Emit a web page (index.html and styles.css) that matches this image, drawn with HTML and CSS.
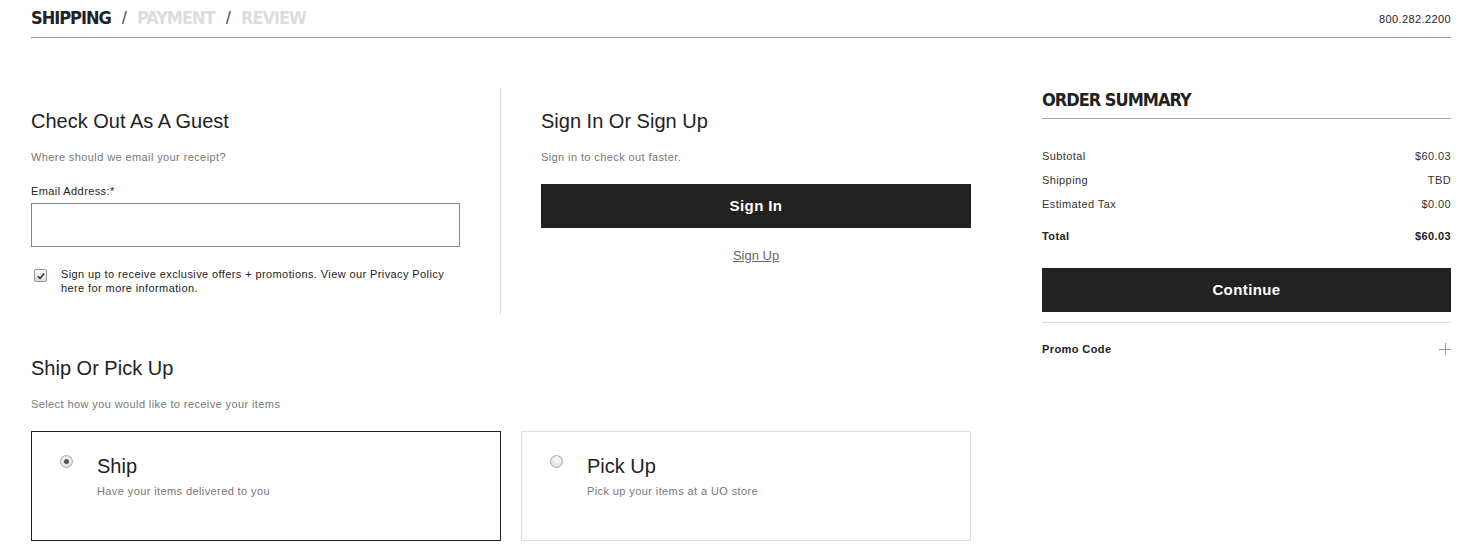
FILE: index.html
```html
<!DOCTYPE html>
<html lang="en">
<head>
  <meta charset="UTF-8">
  <meta name="viewport" content="width=device-width, initial-scale=1.0">
  <title>Checkout - Shipping</title>
  <link rel="stylesheet" href="styles.css">
</head>
<body>
  <div class="page">
    <header class="steps-bar">
      <div class="steps">
        <span class="step active">SHIPPING</span>
        <span class="slash">/</span>
        <span class="step">PAYMENT</span>
        <span class="slash">/</span>
        <span class="step">REVIEW</span>
      </div>
      <div class="phone">800.282.2200</div>
    </header>

    <div class="layout">
      <main class="main-col">
        <div class="account-row">
          <section class="guest">
            <h2>Check Out As A Guest</h2>
            <p class="hint">Where should we email your receipt?</p>
            <label class="field-label" for="email">Email Address:*</label>
            <input class="text-input" type="email" id="email">
            <div class="optin">
              <span class="checkbox">
                <svg width="8" height="8" viewBox="0 0 8 8"><path d="M0.8 4.2 L3 6.4 L7.2 1.4" fill="none" stroke="#333" stroke-width="1.6"/></svg>
              </span>
              <span class="optin-text">Sign up to receive exclusive offers + promotions. View our Privacy Policy here for more information.</span>
            </div>
          </section>

          <section class="signin">
            <h2>Sign In Or Sign Up</h2>
            <p class="hint">Sign in to check out faster.</p>
            <button class="btn-dark signin-btn">Sign In</button>
            <a class="signup-link" href="#">Sign Up</a>
          </section>
        </div>

        <section class="delivery">
          <h2>Ship Or Pick Up</h2>
          <p class="hint">Select how you would like to receive your items</p>
          <div class="options">
            <div class="option selected">
              <span class="radio checked"></span>
              <div class="option-body">
                <div class="option-title">Ship</div>
                <div class="option-sub">Have your items delivered to you</div>
              </div>
            </div>
            <div class="option">
              <span class="radio"></span>
              <div class="option-body">
                <div class="option-title">Pick Up</div>
                <div class="option-sub">Pick up your items at a UO store</div>
              </div>
            </div>
          </div>
        </section>
      </main>

      <aside class="summary">
        <h3 class="summary-title">ORDER SUMMARY</h3>
        <div class="lines">
          <div class="line"><span>Subtotal</span><span>$60.03</span></div>
          <div class="line"><span>Shipping</span><span>TBD</span></div>
          <div class="line"><span>Estimated Tax</span><span>$0.00</span></div>
          <div class="line total"><span>Total</span><span>$60.03</span></div>
        </div>
        <button class="btn-dark continue-btn">Continue</button>
        <div class="promo">
          <span>Promo Code</span>
          <span class="plus"></span>
        </div>
      </aside>
    </div>
  </div>
</body>
</html>
```

FILE: styles.css
```css
html, body {
  margin: 0;
  padding: 0;
  background: #fff;
  color: #222;
  font-family: "Liberation Sans", Arial, Helvetica, sans-serif;
  -webkit-font-smoothing: antialiased;
}
.page {
  padding: 0 31px;
}

/* top bar */
.steps-bar {
  display: flex;
  justify-content: space-between;
  align-items: center;
  height: 37px;
  border-bottom: 1px solid #999;
}
.steps {
  font-family: "DejaVu Sans", sans-serif;
  font-stretch: condensed;
  font-weight: bold;
  font-size: 18px;
  line-height: 24px;
  letter-spacing: -1px;
  display: flex;
  gap: 11px;
  padding-bottom: 1px;
}
.step {
  color: #ddd;
}
.step.active {
  color: #222;
}
.slash {
  color: #666;
  font-size: 16px;
}
.phone {
  font-size: 11px;
  letter-spacing: 0.4px;
  color: #222;
}

/* main grid */
.layout {
  display: grid;
  grid-template-columns: 940px 1fr;
  column-gap: 71px;
}

h2 {
  font-size: 20px;
  line-height: 24px;
  font-weight: normal;
  margin: 0;
  color: #222;
}
.hint {
  font-size: 11px;
  line-height: 14px;
  letter-spacing: 0.4px;
  color: #777;
  margin: 17px 0 0;
}

.account-row {
  display: flex;
  margin-top: 50px;
}
.guest {
  width: 428px;
  padding: 21px 41px 20px 0;
  border-right: 1px solid #ddd;
}
.signin {
  width: 430px;
  padding: 21px 0 20px 40px;
  display: flex;
  flex-direction: column;
}
.field-label {
  display: block;
  font-size: 11px;
  line-height: 14px;
  letter-spacing: 0.4px;
  color: #222;
  margin-top: 20px;
}
.text-input {
  display: block;
  box-sizing: border-box;
  width: 429px;
  height: 44px;
  margin-top: 5px;
  border: 1px solid #888;
  background: #fff;
}
.optin {
  display: flex;
  align-items: flex-start;
  margin-top: 20px;
  gap: 14px;
  padding-left: 3px;
}
.checkbox {
  width: 11px;
  height: 11px;
  margin-top: 2px;
  border: 1px solid #999;
  border-radius: 2px;
  background: linear-gradient(#fdfdfd, #ddd);
  display: flex;
  align-items: center;
  justify-content: center;
  flex-shrink: 0;
}
.optin-text {
  font-size: 11px;
  line-height: 14px;
  letter-spacing: 0.4px;
  color: #222;
  width: 395px;
}

.btn-dark {
  display: block;
  width: 100%;
  height: 44px;
  background: #222;
  color: #fff;
  border: none;
  font-family: "Liberation Sans", Arial, sans-serif;
  font-weight: bold;
  font-size: 15px;
  letter-spacing: 0.4px;
  padding-bottom: 2px;
  cursor: pointer;
}
.signin-btn {
  margin-top: 20px;
}
.signup-link {
  align-self: center;
  margin-top: 20px;
  font-size: 13px;
  line-height: 16px;
  color: #666;
  text-decoration: underline;
}

/* ship or pick up */
.delivery {
  margin-top: 41px;
}
.options {
  display: grid;
  grid-template-columns: 470px 450px;
  column-gap: 20px;
  margin-top: 20px;
}
.option {
  box-sizing: border-box;
  height: 110px;
  border: 1px solid #ddd;
  display: flex;
  padding: 22px 0 0 28px;
  gap: 24px;
}
.option.selected {
  border-color: #222;
}
.radio {
  width: 11px;
  height: 11px;
  margin-top: 1px;
  border: 1px solid #aaa;
  border-radius: 50%;
  background: radial-gradient(circle at 50% 40%, #fafafa, #d6d6d6);
  flex-shrink: 0;
  position: relative;
}
.radio.checked::after {
  content: "";
  position: absolute;
  left: 3px;
  top: 3px;
  width: 5px;
  height: 5px;
  border-radius: 50%;
  background: #555;
}
.option-title {
  font-size: 20px;
  line-height: 24px;
  color: #222;
}
.option-sub {
  font-size: 11px;
  line-height: 14px;
  letter-spacing: 0.4px;
  color: #777;
  margin-top: 6px;
}

/* order summary */
.summary {
  padding-top: 50px;
}
.summary-title {
  margin: 0;
  font-family: "DejaVu Sans", sans-serif;
  font-stretch: condensed;
  font-weight: bold;
  font-size: 18px;
  line-height: 24px;
  letter-spacing: -1px;
  color: #222;
  padding-bottom: 6px;
  border-bottom: 1px solid #aaa;
}
.lines {
  margin-top: 25px;
}
.line {
  display: flex;
  justify-content: space-between;
  font-size: 11px;
  line-height: 24px;
  letter-spacing: 0.4px;
  color: #333;
}
.line.total {
  font-weight: bold;
  margin-top: 8px;
  color: #222;
}
.continue-btn {
  margin-top: 20px;
}
.promo {
  margin-top: 10px;
  border-top: 1px solid #ddd;
  height: 52px;
  display: flex;
  justify-content: space-between;
  align-items: center;
  font-size: 11px;
  font-weight: bold;
  letter-spacing: 0.4px;
  color: #222;
}
.plus {
  width: 12px;
  height: 12px;
  background:
    linear-gradient(#999, #999) center / 12px 1px no-repeat,
    linear-gradient(#999, #999) center / 1px 12px no-repeat;
}
```
